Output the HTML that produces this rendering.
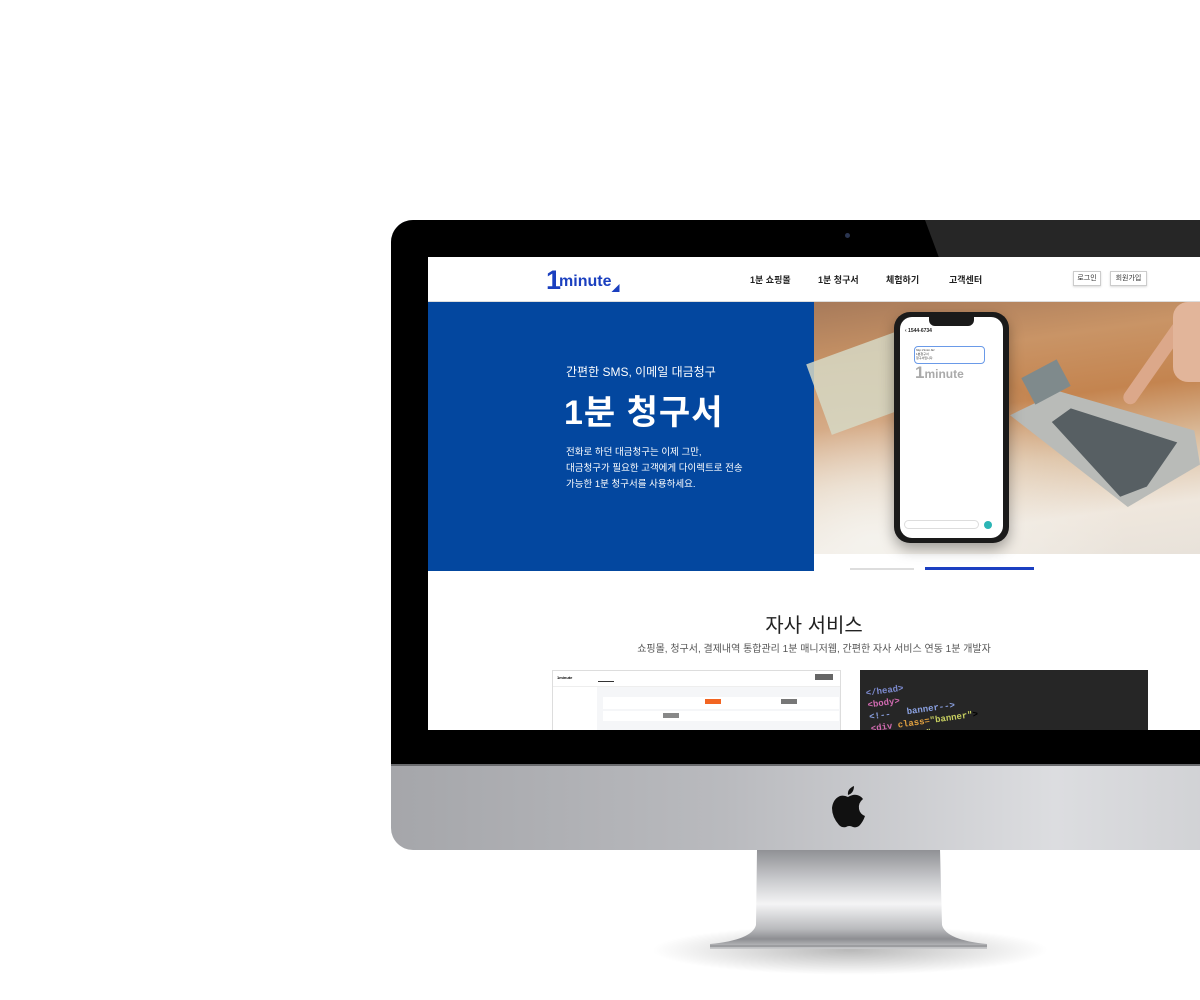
<!DOCTYPE html>
<html><head><meta charset="utf-8"><style>
*{margin:0;padding:0;box-sizing:border-box}
body{width:1200px;height:1000px;background:#fff;position:relative;overflow:hidden;font-family:"Liberation Sans","Noto Sans CJK KR",sans-serif}
.abs{position:absolute}
</style></head><body>
<div class="abs" style="left:650px;top:925px;width:400px;height:50px;border-radius:50%;background:radial-gradient(ellipse at center,rgba(0,0,0,.28),rgba(0,0,0,0) 70%)"></div>
<svg class="abs" style="left:700px;top:845px" width="300" height="110">
<defs><linearGradient id="st" x1="0" y1="0" x2="0" y2="1">
<stop offset="0" stop-color="#8e8f93"/><stop offset=".3" stop-color="#c8c9cc"/><stop offset=".55" stop-color="#f4f4f5"/><stop offset=".8" stop-color="#b9babd"/><stop offset=".9" stop-color="#8d8e92"/><stop offset="1" stop-color="#c9cacc"/></linearGradient></defs>
<path d="M57 4 L240 4 L242 80 Q246 95 287 99 L287 104 L10 104 L10 99 Q52 95 56 80 Z" fill="url(#st)"/>
<path d="M10 101 L287 101" stroke="#9c9da0" stroke-width="2"/>
</svg>
<div class="abs" style="left:391px;top:220px;width:830px;height:630px;border-radius:22px 0 0 22px;background:linear-gradient(90deg,#a5a6aa,#b9babe 40%,#dcdde0 80%,#d0d1d4);"></div>
<div class="abs" style="left:391px;top:220px;width:830px;height:546px;border-radius:22px 0 0 0;background:#000;border-bottom:2px solid #6a6b6e"></div>
<div class="abs" style="left:925px;top:220px;width:275px;height:37px;background:#262626;clip-path:polygon(0 0,100% 0,100% 100%,5% 100%)"></div>
<div class="abs" style="left:845px;top:233px;width:5px;height:5px;border-radius:50%;background:#2a3550"></div>
<svg class="abs" style="left:829px;top:784px" width="38" height="44" viewBox="0 0 38 44">
<path d="M25 2 Q25 9 19 11 Q18 5 25 2Z" fill="#111"/>
<path d="M19 13 Q24 10 28 11 Q32 12 34 15 Q29 19 30 25 Q31 30 36 32 Q34 38 30 42 Q27 44 24 43 Q20 41 17 43 Q13 44 10 41 Q3 33 3 24 Q4 15 11 12 Q15 11 19 13Z" fill="#111"/>
</svg>
<div class="abs" style="left:428px;top:257px;width:772px;height:473px;background:#fff;overflow:hidden">
 <div class="abs" style="left:118px;top:8px;color:#1a3fbf;white-space:nowrap"><span style="font-size:27px;font-weight:bold;letter-spacing:-2px">1</span><span style="font-size:16px;font-weight:bold;position:relative;top:-3px">minute</span><span style="font-size:8px;position:relative;top:2px">&#9698;</span></div>
 <div class="abs" style="left:322px;top:16px;font-size:9px;color:#222;font-weight:bold">1분 쇼핑몰</div>
 <div class="abs" style="left:390px;top:16px;font-size:9px;color:#222;font-weight:bold">1분 청구서</div>
 <div class="abs" style="left:458px;top:16px;font-size:9px;color:#222;font-weight:bold">체험하기</div>
 <div class="abs" style="left:521px;top:16px;font-size:9px;color:#222;font-weight:bold">고객센터</div>
 <div class="abs" style="left:645px;top:14px;width:28px;height:15px;border:1px solid #ccc;font-size:7px;text-align:center;line-height:13px;color:#333;box-shadow:0 1px 2px rgba(0,0,0,.15)">로그인</div>
 <div class="abs" style="left:682px;top:14px;width:37px;height:15px;border:1px solid #ccc;font-size:7px;text-align:center;line-height:13px;color:#333;box-shadow:0 1px 2px rgba(0,0,0,.15)">회원가입</div>
 <div class="abs" style="left:0;top:44px;width:772px;height:1px;background:#ddd"></div>
 <div class="abs" style="left:0;top:45px;width:386px;height:269px;background:#03479f"></div>
 <div class="abs" style="left:138px;top:106px;font-size:12px;color:#fff">간편한 SMS, 이메일 대금청구</div>
 <div class="abs" style="left:136px;top:128px;font-size:34px;color:#fff;font-weight:bold;letter-spacing:1px">1분 청구서</div>
 <div class="abs" style="left:138px;top:188px;font-size:9.5px;color:#fff;line-height:16px">전화로 하던 대금청구는 이제 그만,<br>대금청구가 필요한 고객에게 다이렉트로 전송<br>가능한 1분 청구서를 사용하세요.</div>
 <div class="abs" style="left:386px;top:45px;width:386px;height:252px;background:linear-gradient(172deg,#a77a5a 0%,#c99466 22%,#c4844f 42%,#dcbfa0 62%,#efe7dd 82%,#e8e2da 100%)"></div>
 <div class="abs" style="left:386px;top:45px;width:386px;height:252px;background:radial-gradient(ellipse at 15% 95%,rgba(245,243,238,.95),rgba(245,243,238,0) 55%)"></div>
 <div class="abs" style="left:388px;top:88px;width:100px;height:75px;background:#d6d8c4;transform:rotate(-20deg);opacity:.85"></div>
 <div class="abs" style="left:582px;top:80px;width:190px;height:170px;background:#b9bbb8;clip-path:polygon(0 46%,26% 32%,97% 55%,100% 75%,62% 100%)"></div>
 <div class="abs" style="left:582px;top:80px;width:190px;height:170px;background:#575f63;clip-path:polygon(22% 50%,32% 42%,88% 62%,72% 88%,58% 94%)"></div>
 <div class="abs" style="left:598px;top:110px;width:40px;height:30px;background:#7f8a8c;transform:rotate(-28deg)"></div>
 <div class="abs" style="left:720px;top:55px;width:14px;height:100px;background:#dca88a;border-radius:8px;transform:rotate(35deg)"></div>
 <div class="abs" style="left:745px;top:45px;width:27px;height:80px;background:#e2b59a;border-radius:15px 0 0 15px"></div>
 <div class="abs" style="left:466px;top:55px;width:115px;height:231px;border-radius:16px;background:#1a1a1a;box-shadow:0 6px 14px rgba(0,0,0,.35)"></div>
 <div class="abs" style="left:472px;top:60px;width:103px;height:221px;border-radius:12px;background:#fff"></div>
 <div class="abs" style="left:501px;top:60px;width:45px;height:9px;border-radius:0 0 6px 6px;background:#1a1a1a"></div>
 <div class="abs" style="left:477px;top:71px;font-size:5px;font-weight:bold;color:#222">‹ 1544-6734</div>
 <div class="abs" style="left:486px;top:89px;width:71px;height:18px;border:1px solid #6a9ae8;border-radius:4px;font-size:3px;color:#333;padding:1px">http://1min.biz<br>1분청구서<br>청구서입니다.</div>
 <div class="abs" style="left:487px;top:106px;font-size:17px;color:#aaa;font-weight:bold">1<span style="font-size:12px">minute</span></div>
 <div class="abs" style="left:476px;top:263px;width:75px;height:9px;border:1px solid #ddd;border-radius:5px"></div>
 <div class="abs" style="left:556px;top:264px;width:8px;height:8px;border-radius:50%;background:#2bb5b5"></div>
 <div class="abs" style="left:422px;top:311px;width:64px;height:2px;background:#ddd"></div>
 <div class="abs" style="left:497px;top:310px;width:109px;height:3px;background:#1b3fc1"></div>
 <div class="abs" style="left:0;top:352px;width:772px;text-align:center;font-size:20px;color:#222">자사 서비스</div>
 <div class="abs" style="left:0;top:383px;width:772px;text-align:center;font-size:10px;color:#555">쇼핑몰, 청구서, 결제내역 통합관리 1분 매니저웹, 간편한 자사 서비스 연동 1분 개발자</div>
 <div class="abs" style="left:124px;top:413px;width:289px;height:70px;border:1px solid #ddd;background:#f5f6f8">
  <div style="height:16px;background:#fff;border-bottom:1px solid #eee;font-size:4px;padding:4px"><b>1minute</b></div>
  <div class="abs" style="left:0;top:16px;width:44px;height:60px;background:#fff"></div>
  <div class="abs" style="left:50px;top:26px;width:236px;height:12px;background:#fff"></div>
  <div class="abs" style="left:152px;top:28px;width:16px;height:5px;background:#f26522"></div>
  <div class="abs" style="left:228px;top:28px;width:16px;height:5px;background:#777"></div>
  <div class="abs" style="left:50px;top:40px;width:236px;height:10px;background:#fff"></div>
  <div class="abs" style="left:110px;top:42px;width:16px;height:5px;background:#888"></div>
  <div class="abs" style="left:45px;top:3px;width:16px;height:8px;border-bottom:1px solid #333"></div>
  <div class="abs" style="left:262px;top:3px;width:18px;height:6px;background:#666"></div>
 </div>
 <div class="abs" style="left:432px;top:413px;width:288px;height:70px;background:#262626;overflow:hidden;font-family:'Liberation Mono',monospace;font-size:9px;line-height:12px;font-weight:bold">
  <div style="transform:rotate(-8deg);margin:-2px 0 0 8px;white-space:nowrap"><span style="color:#7d8bd0">&lt;/head&gt;</span><br><span style="color:#d06ab0">&lt;body&gt;</span><br><span style="color:#8aa0e0">&lt;!-- &nbsp; banner--&gt;</span><br><span style="color:#d06ab0">&lt;div</span> <span style="color:#e0a040">class=</span><span style="color:#c8d060">"banner"</span>&gt;<br><span style="color:#e0a040">class=</span><span style="color:#c8d060">"nav"</span>&gt;</div>
 </div>
</div>
</body></html>
